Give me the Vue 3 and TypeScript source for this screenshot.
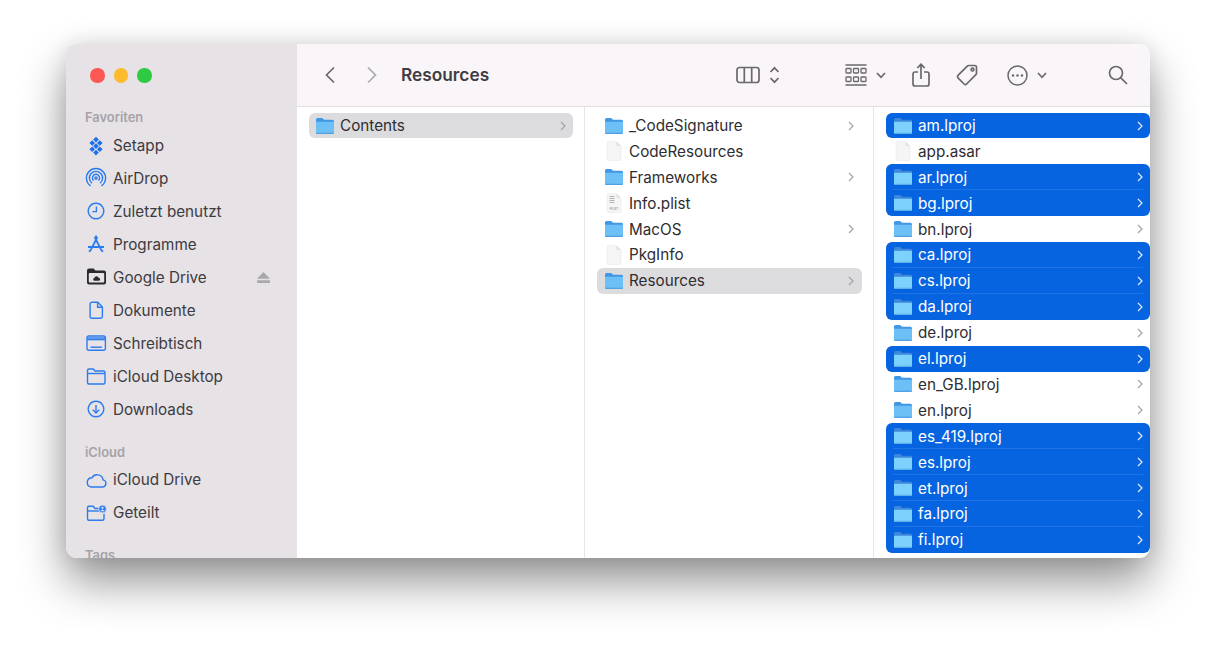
<script setup lang="ts">
interface SideItem {
  label: string
  paths: string[]
  filled?: boolean
  bold?: boolean
  eject?: boolean
}
interface FileRow {
  name: string
  kind: 'folder' | 'doc' | 'plist'
  selected?: boolean
}

// sidebar icons, all drawn in a 24x24 box
const favorites: SideItem[] = [
  {
    label: 'Setapp',
    filled: true,
    paths: [
      'M12 3.800l2.800 2.800-2.800 2.800-2.800-2.800z',
      'M8.200 7.200l2.800 2.800-2.800 2.800L5.400 10z',
      'M15.800 7.200l2.800 2.800-2.800 2.800L13 10z',
      'M12 10.300l2.800 2.800-2.800 2.800-2.800-2.800z',
      'M8.200 13.400l2.800 2.800-2.800 2.800-2.800-2.800z',
      'M15.800 13.400l2.800 2.800-2.800 2.800-2.800-2.800z',
      'M12 16.800l2.800 2.800-2.800 2.800-2.800-2.800z',
    ],
  },
  {
    label: 'AirDrop',
    paths: [
      'M6.600 20A9.600 9.600 0 1 1 17.400 20',
      'M8 17.200A6.600 6.600 0 1 1 16 17.200',
      'M9.600 14.600A3.600 3.600 0 1 1 14.400 14.600',
      'M12 10.900a1.100 1.100 0 1 0 .01 0',
    ],
  },
  { label: 'Zuletzt benutzt', paths: ['M12 4.300a7.700 7.700 0 1 0 .01 0', 'M12.400 7.600v5H8.400'] },
  {
    label: 'Programme',
    bold: true,
    paths: ['M13.400 5L6.400 18.600', 'M10.600 5L17.600 18.600', 'M4 15h16', 'M12 3.400v1.800', 'M4.800 19.400l1.800-.8', 'M19.200 19.400l-1.800-.8'],
  },
  {
    label: 'Google Drive',
    eject: true,
    paths: [],
  },
  {
    label: 'Dokumente',
    paths: ['M7.800 4.200h6l4.600 4.800v9.600a1.700 1.700 0 0 1-1.700 1.700H7.800a1.700 1.700 0 0 1-1.700-1.700V5.900a1.700 1.700 0 0 1 1.700-1.700z', 'M13.600 4.400v4.800h4.600'],
  },
  {
    label: 'Schreibtisch',
    paths: ['M4.800 5h14.800a1.800 1.800 0 0 1 1.800 1.800v10.600a1.800 1.800 0 0 1-1.800 1.800H4.800A1.800 1.800 0 0 1 3 17.400V6.800A1.800 1.800 0 0 1 4.800 5z', 'M3.400 7h17.600', 'M3.400 8.600h17.600', 'M6.500 16.200h11.400'],
  },
  {
    label: 'iCloud Desktop',
    paths: ['M3.500 8.200V6.500a1.500 1.500 0 0 1 1.500-1.500h4.300l1.800 2h8.400a1.500 1.500 0 0 1 1.500 1.500v10a1.500 1.500 0 0 1-1.500 1.500H5a1.500 1.500 0 0 1-1.500-1.500z', 'M3.500 9.500h17.500'],
  },
  { label: 'Downloads', paths: ['M12 4.300a7.700 7.700 0 1 0 .01 0', 'M12 8v8', 'M8.800 12.800L12 16l3.200-3.200'] },
]

const icloud: SideItem[] = [
  {
    label: 'iCloud Drive',
    paths: ['M7 19h11.200a3.600 3.600 0 0 0 .9-7.100A6 6 0 0 0 8 9.700 4.700 4.700 0 0 0 7 19z'],
  },
  {
    label: 'Geteilt',
    paths: ['M15 7.500h-4l-1.800-2.200H5A1.500 1.500 0 0 0 3.500 6.800v11A1.500 1.500 0 0 0 5 19.300h13.500a1.500 1.500 0 0 0 1.500-1.500v-5', 'M3.500 10h12'],
  },
]

const contents: FileRow[] = [{ name: 'Contents', kind: 'folder', selected: true }]

const appFiles: FileRow[] = [
  { name: '_CodeSignature', kind: 'folder' },
  { name: 'CodeResources', kind: 'doc' },
  { name: 'Frameworks', kind: 'folder' },
  { name: 'Info.plist', kind: 'plist' },
  { name: 'MacOS', kind: 'folder' },
  { name: 'PkgInfo', kind: 'doc' },
  { name: 'Resources', kind: 'folder', selected: true },
]

const selectedLocales = ['am', 'ar', 'bg', 'ca', 'cs', 'da', 'el', 'es_419', 'es', 'et', 'fa', 'fi']
const locales: FileRow[] = ['am', 'app.asar', 'ar', 'bg', 'bn', 'ca', 'cs', 'da', 'de', 'el', 'en_GB', 'en', 'es_419', 'es', 'et', 'fa', 'fi'].map(
  (n) =>
    n === 'app.asar'
      ? { name: n, kind: 'doc' as const }
      : { name: `${n}.lproj`, kind: 'folder' as const, selected: selectedLocales.includes(n) },
)

// neighbouring selected rows melt into one block
function activeClass(list: FileRow[], i: number) {
  if (!list[i].selected) return []
  return ['active', { 'join-up': list[i - 1]?.selected, 'join-down': list[i + 1]?.selected }]
}
</script>

<template>
  <div class="page">
    <div class="window">
      <aside class="sidebar">
        <div class="lights">
          <span class="light red"></span>
          <span class="light yellow"></span>
          <span class="light green"></span>
        </div>

        <div class="side-title">Favoriten</div>
        <div v-for="item in favorites" :key="item.label" class="side-item">
          <svg class="side-icon" :class="{ filled: item.filled, bold: item.bold }" width="24" height="24" viewBox="0 0 24 24">
            <template v-if="item.label === 'Google Drive'">
              <path class="gd-body" d="M3 5.500a2 2 0 0 1 2-2h4.600l1.800 2H20a2 2 0 0 1 2 2v10a2 2 0 0 1-2 2H5a2 2 0 0 1-2-2z" />
              <rect class="gd-window" x="4.800" y="8" width="15.400" height="9.600" rx=".8" />
              <path class="gd-body" d="M10.200 15.800a1.500 1.500 0 0 1 .1-2.900 2.300 2.300 0 0 1 4.400-.2 1.600 1.600 0 0 1 .4 3.100z" />
            </template>
            <path v-for="d in item.paths" :key="d" :d="d" />
          </svg>
          <span class="side-label">{{ item.label }}</span>
          <svg v-if="item.eject" class="eject" width="13" height="11" viewBox="0 0 13 11">
            <path d="M6.500 0L13 6.800H0z" />
            <rect y="8.300" width="13" height="2.700" rx=".4" />
          </svg>
        </div>

        <div class="side-title section">iCloud</div>
        <div v-for="item in icloud" :key="item.label" class="side-item">
          <svg class="side-icon" width="24" height="24" viewBox="0 0 24 24">
            <path v-for="d in item.paths" :key="d" :d="d" />
            <template v-if="item.label === 'Geteilt'">
              <circle class="badge" cx="18.500" cy="8" r="3.900" />
              <circle class="badge-in" cx="18.500" cy="6.900" r="1.100" />
              <path class="badge-in" d="M16.500 10.300a2.100 2.100 0 0 1 4 0z" />
            </template>
          </svg>
          <span class="side-label">{{ item.label }}</span>
        </div>

        <div class="side-title section">Tags</div>
      </aside>

      <main class="main">
        <header class="toolbar">
          <svg class="tool back" width="12" height="18" viewBox="0 0 12 18"><path d="M10 1.500L2.500 9l7.500 7.500" /></svg>
          <svg class="tool forward" width="12" height="18" viewBox="0 0 12 18"><path d="M2 1.500L9.500 9 2 16.500" /></svg>
          <span class="title">Resources</span>

          <svg class="tool view" width="24" height="18" viewBox="0 0 24 18">
            <rect x="1" y="1.500" width="22" height="15" rx="2.500" />
            <path d="M8.300 1.500v15M15.700 1.500v15" />
          </svg>
          <svg class="tool updown" width="11" height="18" viewBox="0 0 11 18">
            <path d="M1.500 6L5.500 1.800 9.500 6M1.500 12l4 4.200 4-4.200" />
          </svg>

          <svg class="tool group" width="22" height="22" viewBox="0 0 22 22">
            <path d="M.500 1h21M.500 21h21" />
            <rect x="1" y="4.500" width="5" height="4.500" rx=".8" />
            <rect x="8.500" y="4.500" width="5" height="4.500" rx=".8" />
            <rect x="16" y="4.500" width="5" height="4.500" rx=".8" />
            <rect x="1" y="13" width="5" height="4.500" rx=".8" />
            <rect x="8.500" y="13" width="5" height="4.500" rx=".8" />
            <rect x="16" y="13" width="5" height="4.500" rx=".8" />
          </svg>
          <svg class="tool caret" width="10" height="7" viewBox="0 0 10 7"><path d="M1 1l4 4.300L9 1" /></svg>

          <svg class="tool share" width="18" height="24" viewBox="0 0 18 24">
            <path d="M6 9H3a2 2 0 0 0-2 2v10a2 2 0 0 0 2 2h12a2 2 0 0 0 2-2V11a2 2 0 0 0-2-2h-3" />
            <path d="M9 16V1.500M5.300 5L9 1.300 12.700 5" />
          </svg>
          <svg class="tool tag" width="24" height="24" viewBox="0 0 24 24">
            <path d="M13.700 2.500h6a1.800 1.800 0 0 1 1.800 1.800v6a2 2 0 0 1-.6 1.400L11.600 21a1.800 1.800 0 0 1-2.500 0L3 14.900a1.800 1.800 0 0 1 0-2.500l9.300-9.300a2 2 0 0 1 1.400-.6z" />
            <circle cx="17.500" cy="6.500" r="1.400" />
          </svg>
          <svg class="tool more" width="21" height="21" viewBox="0 0 21 21">
            <circle cx="10.500" cy="10.500" r="9.500" />
            <circle class="dot" cx="6" cy="10.500" r="1.200" />
            <circle class="dot" cx="10.500" cy="10.500" r="1.200" />
            <circle class="dot" cx="15" cy="10.500" r="1.200" />
          </svg>
          <svg class="tool caret caret-more" width="10" height="7" viewBox="0 0 10 7"><path d="M1 1l4 4.300L9 1" /></svg>

          <svg class="tool search" width="20" height="20" viewBox="0 0 20 20">
            <circle cx="8" cy="8" r="6.500" />
            <path d="M12.800 12.800L19 19" />
          </svg>
        </header>

        <div class="columns">
          <section
            v-for="(list, c) in [contents, appFiles, locales]"
            :key="c"
            class="column"
            :class="`col-${c}`"
          >
            <div
              v-for="(row, i) in list"
              :key="row.name"
              class="row"
              :class="[activeClass(list, i), { dim: c < 2 }]"
            >
              <svg v-if="row.kind === 'folder'" class="file-icon" width="20" height="18" viewBox="0 0 20 18">
                <path class="folder-back" d="M1 2.500A1.500 1.500 0 0 1 2.500 1h4.200c.5 0 .9.200 1.200.500L9 2.700h8.500A1.500 1.500 0 0 1 19 4.200V8H1z" />
                <path class="folder-front" d="M1 4.700h18v10.800a1.500 1.500 0 0 1-1.500 1.500h-15A1.500 1.500 0 0 1 1 15.500z" />
                <path class="folder-edge" d="M1.300 16.300h17.400" />
              </svg>
              <svg v-else class="file-icon" width="20" height="20" viewBox="0 0 20 20">
                <path class="doc" d="M3 1.500a1 1 0 0 1 1-1h8.500L17 5v13.500a1 1 0 0 1-1 1H4a1 1 0 0 1-1-1z" />
                <path class="doc-fold" d="M12.500 .500V4a1 1 0 0 0 1 1H17z" />
                <template v-if="row.kind === 'plist'">
                  <path class="doc-lines" d="M5.500 3.500h5M5.500 5.500h5M5.500 7.500h5M5.500 9.500h5" />
                  <text class="doc-text" x="10" y="16.500" text-anchor="middle">PLIST</text>
                </template>
              </svg>
              <span class="name">{{ row.name }}</span>
              <svg v-if="row.kind === 'folder'" class="chev" width="6" height="10" viewBox="0 0 6 10">
                <path d="M1 1l4 4-4 4" />
              </svg>
            </div>
          </section>
        </div>
      </main>
    </div>
  </div>
</template>

<style>
html,
body {
  background: #fff;
}
</style>

<style scoped>
.page {
  width: 1216px;
  height: 645px;
  padding: 44px 66px 87px;
  box-sizing: border-box;
  overflow: hidden;
  font-family: Inter, "Liberation Sans", sans-serif;
}

.window {
  display: flex;
  height: 514px;
  border-radius: 11px;
  overflow: hidden;
  background: #fff;
  box-shadow: 0 24px 46px rgba(0, 0, 0, 0.42), 0 0 22px rgba(0, 0, 0, 0.1);
}

/* sidebar */
.sidebar {
  width: 231px;
  flex-shrink: 0;
  background: #e6e2e6;
  overflow: hidden;
}

.lights {
  display: flex;
  gap: 9px;
  padding: 24px 0 22.5px 24px;
}

.light {
  width: 14.5px;
  height: 14.5px;
  border-radius: 50%;
}
.red { background: #fc5753; }
.yellow { background: #fdbc2e; }
.green { background: #2ecb42; }

.side-title {
  height: 23.5px;
  line-height: 25.5px;
  padding-left: 19px;
  font-size: 12.9px;
  font-weight: 600;
  color: #a6a3a7;
}
.side-title.section {
  margin-top: 14.2px;
}

.side-item {
  display: flex;
  align-items: center;
  height: 33px;
  padding-left: 18px;
  font-size: 15.25px;
  color: #3d3b3f;
}

.side-label {
  margin-left: 5px;
}

.side-icon {
  flex-shrink: 0;
  fill: none;
  stroke: #2b7cee;
  stroke-width: 1.4;
}
.side-icon.bold {
  stroke-width: 1.8;
}
.side-icon.filled {
  fill: #1d70ea;
  stroke: none;
}
.gd-body {
  fill: #2a2a2c;
  stroke: none;
}
.gd-window {
  fill: #e6e2e6;
  stroke: none;
}
.badge {
  fill: #2b7cee;
  stroke: #e6e2e6;
  stroke-width: 0.8;
}
.badge-in {
  fill: #e6e2e6;
  stroke: none;
}

.eject {
  margin-left: auto;
  margin-right: 27px;
  fill: #a9a7aa;
}

/* toolbar */
.main {
  flex: 1;
  min-width: 0;
  display: flex;
  flex-direction: column;
}

.toolbar {
  display: flex;
  align-items: center;
  height: 62px;
  flex-shrink: 0;
  padding-left: 27px;
  background: #faf5f9;
  border-bottom: 1px solid #e2dfe2;
}

.tool {
  flex-shrink: 0;
  fill: none;
  stroke: #6a686b;
  stroke-width: 1.7;
}
.forward {
  margin-left: 30px;
  stroke: #ababad;
}
.title {
  margin: 0 0 1px 23px;
  font-size: 17.3px;
  font-weight: 600;
  color: #3f3d41;
}
.view { margin-left: 246.500px; }
.updown { margin-left: 9px; }
.group { margin-left: 65px; stroke-width: 1.3; }
.caret { margin-left: 9px; }
.share { margin-left: 26px; }
.tag { margin-left: 25px; }
.more { margin-left: 28px; stroke-width: 1.5; }
.more .dot { fill: #6a686b; stroke: none; }
.caret-more { margin-left: 9px; }
.search { margin-left: 61px; }

/* finder columns */
.columns {
  flex: 1;
  min-height: 0;
  display: grid;
  grid-template-columns: 288px 289px 276px;
  background: #fff;
}

.column {
  padding: 5.6px 11px 0 12px;
  border-right: 1px solid #e6e6e6;
}
.col-2 {
  padding-right: 0;
  border-right: 0;
}
.col-0 .row {
  padding-left: 6px;
}
.col-1 .row {
  padding-right: 8px;
}

.row {
  position: relative;
  display: flex;
  align-items: center;
  height: 25.9px;
  padding: 0 7px 0 7px;
  border-radius: 6px;
  box-sizing: border-box;
  font-size: 15.25px;
  color: #2f2d31;
}

.file-icon {
  flex-shrink: 0;
}
.name {
  margin-left: 5px;
  white-space: nowrap;
}
.chev {
  margin-left: auto;
  fill: none;
  stroke: #a4a4a6;
  stroke-width: 1.2;
}

.folder-back { fill: #3f97e6; }
.folder-front { fill: #6cc0f6; }
.folder-edge { stroke: #4d9fe0; stroke-width: 1.2; fill: none; }
.doc { fill: #f5f5f6; stroke: #e6e6e7; stroke-width: 0.5; }
.doc-fold { fill: #e2e2e4; }
.doc-lines { stroke: #b3b3b5; stroke-width: 1; fill: none; }
.doc-text { font-size: 3px; fill: #77777a; font-family: "Liberation Sans", sans-serif; }

.row.dim.active {
  background: #dcdcde;
}
.row.active:not(.dim) {
  background: #0764e0;
  color: #fff;
}
.row.active:not(.dim) .chev {
  stroke: #dfeafb;
}
.row.active:not(.dim) .folder-back { fill: #3d86dc; }
.row.active:not(.dim) .folder-front { fill: #7cd2fd; }
.row.active:not(.dim) .folder-edge { stroke: #5aaeea; }

.row.join-up {
  border-top-left-radius: 0;
  border-top-right-radius: 0;
}
.row.join-down {
  border-bottom-left-radius: 0;
  border-bottom-right-radius: 0;
}
/* thin seam between two selected rows */
.row.join-down::after {
  content: "";
  position: absolute;
  left: 7px;
  right: 7px;
  bottom: 0;
  height: 1px;
  background: rgba(255, 255, 255, 0.1);
}
</style>
